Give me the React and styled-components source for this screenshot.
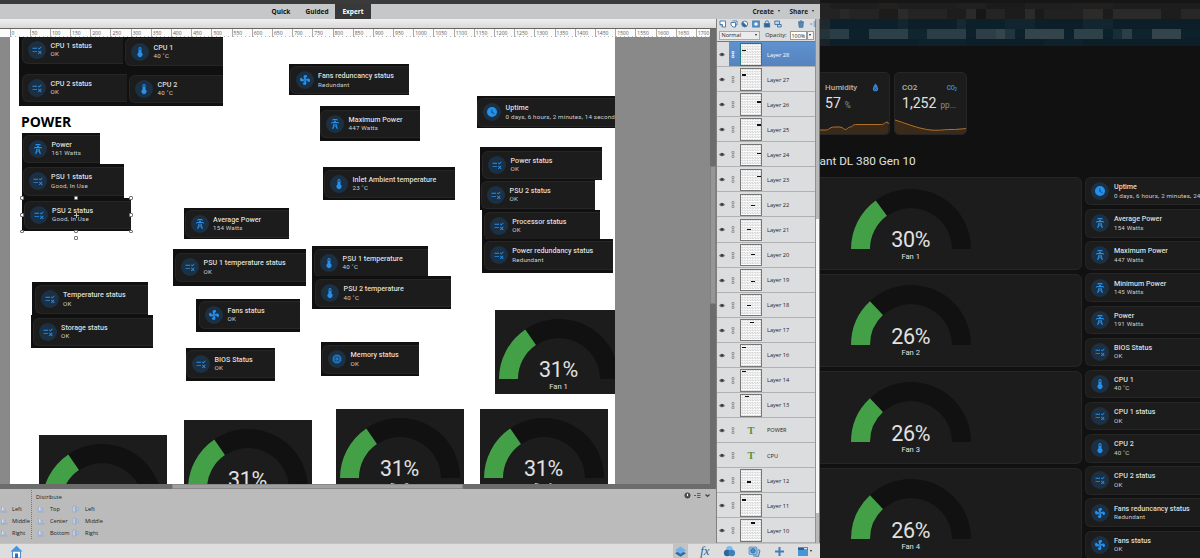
import React from "react";
import styled, { createGlobalStyle, css } from "styled-components";

const GlobalStyle = createGlobalStyle`
  * {
    box-sizing: border-box;
  }
  body {
    margin: 0;
    background: #111111;
    overflow: hidden;
  }
`;

const Screen = styled.div`
  display: flex;
  width: 1200px;
  height: 558px;
  overflow: hidden;
  font-family: Roboto, "Liberation Sans", sans-serif;
`;

/* ---------- icons ---------- */

const PATHS = {
  tower:
    "M8.28,5.45L6.5,4.55L7.76,2H16.23L17.5,4.55L15.72,5.44L15,4H9L8.28,5.45M18.62,8H14.09L13.3,5H10.7L9.91,8H5.38L4.1,10.55L5.89,11.44L6.62,10H17.38L18.1,11.45L19.89,10.56L18.62,8M17.77,22H15.7L15.46,21.1L12,15.9L8.53,21.1L8.3,22H6.23L9.12,11H11.19L10.83,12.35L12,14.1L13.16,12.35L12.81,11H14.88L17.77,22M11.4,15L10.5,13.65L9.32,18.13L11.4,15M14.68,18.12L13.5,13.64L12.6,15L14.68,18.12Z",
  temp: "M15 13V5A3 3 0 0 0 9 5V13A5 5 0 1 0 15 13M12 4A1 1 0 0 1 13 5V8H11V5A1 1 0 0 1 12 4Z",
  fan: "M12,11A1,1 0 0,0 11,12A1,1 0 0,0 12,13A1,1 0 0,0 13,12A1,1 0 0,0 12,11M12.5,2C17,2 17.11,5.57 14.75,6.75C13.76,7.24 13.32,8.29 13.13,9.22C13.61,9.42 14.03,9.73 14.35,10.13C18.05,8.13 22.03,8.92 22.03,12.5C22.03,17 18.46,17.1 17.28,14.73C16.78,13.74 15.72,13.3 14.79,13.11C14.59,13.59 14.28,14 13.88,14.34C15.87,18.03 15.08,22 11.5,22C7,22 6.91,18.42 9.27,17.24C10.25,16.75 10.69,15.71 10.89,14.79C10.4,14.59 9.97,14.27 9.65,13.87C5.96,15.85 2,15.07 2,11.5C2,7 5.56,6.89 6.74,9.26C7.24,10.25 8.29,10.68 9.22,10.87C9.41,10.39 9.73,9.97 10.14,9.65C8.15,5.96 8.94,2 12.5,2Z",
  clock:
    "M12 2A10 10 0 1 0 22 12A10 10 0 0 0 12 2M16.2 16.2L11 13V7H12.5V12.2L17 14.9L16.2 16.2Z",
  chip: "M17,17H7V7H17M21,11V9H19V7C19,5.89 18.1,5 17,5H15V3H13V5H11V3H9V5H7C5.89,5 5,5.89 5,7V9H3V11H5V13H3V15H5V17A2,2 0 0,0 7,19H9V21H11V19H13V21H15V19H17A2,2 0 0,0 19,17V15H21V13H19V11M13,13H11V11H13M15,9H9V15H15V9Z",
  list: "M3 7.7H12V9.4H3ZM3 14.4H12V16.1H3ZM16.6 11L13.6 8L14.8 6.8L16.6 8.6L20.2 5L21.4 6.2ZM15 12.9L17.5 15.4L20 12.900L21.200 14.100L18.700 16.600L21.200 19.100L20 20.300L17.500 17.800L15 20.300L13.800 19.100L16.300 16.600L13.800 14.100Z",
};

const Disc = styled.div`
  display: flex;
  align-items: center;
  justify-content: center;
  flex: none;
  width: 18px;
  height: 18px;
  border-radius: 50%;
  background: #1c3044;

  svg {
    width: 12px;
    height: 12px;
    fill: #2490ec;
  }
`;

const EntityIcon = ({ name }) => (
  <Disc>
    <svg viewBox="0 0 24 24">
      <path d={PATHS[name]} />
    </svg>
  </Disc>
);

/* ---------- dashboard pieces, used in both windows ---------- */

const Tile = styled.div`
  display: flex;
  align-items: center;
  flex: none;
  gap: 4.6px;
  height: 28.4px;
  padding-left: 5px;
  background: #1c1c1c;
  border: 1px solid #262626;
  border-right: 0;
  border-radius: 6px 0 0 6px;
  font-family: Roboto, "Liberation Sans", sans-serif;
  white-space: nowrap;
`;
const TileText = styled.div`
  display: flex;
  flex-direction: column;
`;
const TileName = styled.span`
  color: #dedede;
  font-size: 7.15px;
  font-weight: 500;
  line-height: 9.4px;
`;
const TileState = styled.span`
  color: #cfcfcf;
  font-size: 6.2px;
  letter-spacing: 0.18px;
  line-height: 8.6px;
`;

const EntityTile = ({ icon, name, state }) => (
  <Tile>
    <EntityIcon name={icon} />
    <TileText>
      <TileName>{name}</TileName>
      <TileState>{state}</TileState>
    </TileText>
  </Tile>
);

const GaugeBox = styled.div`
  display: flex;
  flex-direction: column;
  align-items: center;
  width: 120px;
  color: #e1e1e1;
  font-family: Roboto, "Liberation Sans", sans-serif;

  svg {
    display: block;
    width: 120px;
    height: 60px;
  }
`;
const GaugeValue = styled.span`
  margin-top: -19.6px;
  font-size: 21.5px;
  line-height: 22px;
  letter-spacing: -0.3px;
`;
const GaugeName = styled.span`
  margin-top: 0.6px;
  font-size: 7.6px;
  line-height: 10px;
`;

const Gauge = ({ value, name }) => {
  const a = (Math.PI * value) / 100;
  const at = (r) => `${60 - r * Math.cos(a)} ${60 - r * Math.sin(a)}`;
  return (
    <GaugeBox>
      <svg viewBox="0 0 120 60">
        <path d="M0 60A60 60 0 0 1 120 60H101A41 41 0 0 0 19 60Z" fill="#111111" />
        <path d={`M0 60A60 60 0 0 1 ${at(60)}L${at(41)}A41 41 0 0 0 19 60Z`} fill="#43a047" />
      </svg>
      <GaugeValue>{value}%</GaugeValue>
      <GaugeName>{name}</GaugeName>
    </GaugeBox>
  );
};

/* ---------- photo editor ---------- */

const Editor = styled.div`
  display: flex;
  flex-direction: column;
  flex: none;
  width: 820px;
  height: 558px;
  color: #1c1c1c;
  font-family: "Open Sans", "Liberation Sans", sans-serif;
`;
const TitleStrip = styled.div`
  flex: none;
  height: 3.5px;
  background: #3b3b3b;
`;
const MenuBar = styled.div`
  display: flex;
  flex: none;
  height: 15px;
  padding-left: 263px;
  background: #c6c7c8;
  font-size: 6.5px;
  font-weight: 700;
`;
const ModeTab = styled.div`
  display: flex;
  align-items: center;
  justify-content: center;
  width: 36px;
  color: ${({ $active }) => ($active ? "#ffffff" : "#111111")};
  background: ${({ $active }) => ($active ? "#383838" : "transparent")};
`;
const MenuButton = styled.div`
  display: flex;
  align-items: center;
  gap: 4px;
  margin-left: ${({ $first }) => ($first ? "auto" : "9.5px")};
  margin-right: ${({ $first }) => ($first ? "0" : "6px")};
`;
const Caret = styled.i`
  flex: none;
  border: 1.6px solid transparent;
  border-top: 2px solid #222222;
  border-bottom: 0;
`;
const EditorBody = styled.div`
  display: flex;
  flex: 1;
  min-height: 0;
`;
const DocumentColumn = styled.div`
  display: flex;
  flex-direction: column;
  width: 716px;
`;
const OptionsStrip = styled.div`
  flex: none;
  height: 10.5px;
  background: linear-gradient(#efefef, #d9d9d9);
  border-bottom: 1px solid #6b6262;
`;
const DocumentRow = styled.div`
  display: flex;
  flex: none;
  height: 455px;
`;
const DocumentArea = styled.div`
  width: 710px;
  background: #898989;
  overflow: hidden;
`;
const Ruler = styled.div`
  display: flex;
  height: 8px;
  padding-left: 9.5px;
  background: #fbfbfb;
  color: #5c5c5c;
  font-family: "Open Sans", sans-serif;
  font-size: 5px;
  line-height: 9px;
`;
const RulerMark = styled.span`
  flex: none;
  width: 20.2px;
  padding-left: 1px;
  border-left: 0.5px solid #aaaaaa;
  background: repeating-linear-gradient(90deg, #bbbbbb 0 1px, transparent 1px 4px) 0 100% / 100% 1px
    no-repeat;
`;
const VScroll = styled.div`
  display: flex;
  align-items: flex-start;
  width: 6px;
  padding-top: 137px;
  background: #6c6c6c;
`;
const VThumb = styled.div`
  width: 6px;
  height: 138px;
  background: #969696;
  border: 0.5px solid #808080;
`;
const HScroll = styled.div`
  flex: none;
  height: 5px;
  padding-left: 172px;
  background: #6c6c6c;
`;
const HThumb = styled.div`
  width: 291px;
  height: 5px;
  background: #a0a0a0;
  border: 1px solid #888888;
`;

/* the picture being edited: a free canvas, so its layers sit at coordinates */
const Sheet = styled.div`
  position: relative;
  width: 605.5px;
  height: 447px;
  margin-left: 9.5px;
  background: #ffffff;
  overflow: hidden;
`;
const ORIGIN = { x: 9.5, y: 37 };
const Layer = styled.div`
  position: absolute;
  left: ${({ $x }) => $x - ORIGIN.x}px;
  top: ${({ $y }) => $y - ORIGIN.y}px;
  width: ${({ $w }) => $w}px;
  height: ${({ $h }) => $h}px;
  background: ${({ $bg }) => $bg || "#101010"};
  overflow: hidden;
`;
const TileInset = styled.div`
  padding-left: ${({ $left }) => $left}px;
  margin-top: ${({ $top }) => $top}px;
`;
const GaugeInset = styled.div`
  padding: 9px 0 0 3.5px;
`;
const PowerHeading = styled.div`
  position: absolute;
  left: 11.5px;
  top: 75px;
  color: #000000;
  font-family: "Open Sans", sans-serif;
  font-size: 14px;
  font-weight: 700;
  line-height: 20px;
  letter-spacing: -0.1px;
`;
const Handle = styled.i`
  position: absolute;
  left: ${({ $x }) => $x - ORIGIN.x - 1.75}px;
  top: ${({ $y }) => $y - ORIGIN.y - 1.75}px;
  width: 3.5px;
  height: 3.5px;
  background: #ffffff;
  border: 1px solid #777777;
  border-radius: 1px;
`;
const Pivot = styled.svg`
  position: absolute;
  left: 64px;
  top: 175.5px;
  width: 5px;
  height: 5px;
  stroke: #dddddd;
  stroke-width: 0.8;
`;

// x, y, w, h of the cut-out, then the centre of its round icon
const snippets = [
  [19, 37, 106, 32, 37, 50, "list", "CPU 1 status", "OK"],
  [19, 69, 110, 37, 37, 88, "list", "CPU 2 status", "OK"],
  [123, 37, 100, 32, 140, 52, "temp", "CPU 1", "40 ˚C"],
  [127, 69, 96, 37, 144, 89, "temp", "CPU 2", "40 ˚C"],
  [22, 133, 78, 31, 38, 149, "tower", "Power", "161 Watts"],
  [22, 164, 102, 34, 37.5, 181.5, "list", "PSU 1 status", "Good, In Use"],
  [22, 198, 109, 33, 38.5, 215, "list", "PSU 2 status", "Good, In Use"],
  [184, 208, 105, 31, 199.5, 224, "tower", "Average Power", "154 Watts"],
  [289, 64, 120, 31, 304.5, 80.3, "fan", "Fans reduncancy status", "Redundant"],
  [320, 106, 100, 34.5, 334.7, 124, "tower", "Maximum Power", "447 Watts"],
  [323, 167, 132, 32.5, 339, 183.7, "temp", "Inlet Ambient temperature", "23 ˚C"],
  [477, 95.5, 145, 32.5, 492, 112.5, "clock", "Uptime", "0 days, 6 hours, 2 minutes, 14 seconds"],
  [480, 147, 122, 33, 497, 165, "list", "Power status", "OK"],
  [480, 180, 115, 30, 496, 195, "list", "PSU 2 status", "OK"],
  [482, 210, 118, 30, 498.7, 226, "list", "Processor status", "OK"],
  [482, 239, 131, 33.5, 498.7, 255.5, "list", "Power redundancy status", "Redundant"],
  [173, 249, 133, 37, 190, 267.5, "list", "PSU 1 temperature status", "OK"],
  [312, 245.5, 116, 31, 329, 263, "temp", "PSU 1 temperature", "40 ˚C"],
  [312, 276, 138.5, 33, 330, 293.2, "temp", "PSU 2 temperature", "40 ˚C"],
  [32, 282, 116, 33, 49.5, 299.5, "list", "Temperature status", "OK"],
  [31, 315, 121.5, 33, 47.5, 332, "list", "Storage status", "OK"],
  [196, 298.5, 104, 33.5, 214, 315, "fan", "Fans status", "OK"],
  [186, 348, 89, 33, 201, 364, "list", "BIOS Status", "OK"],
  [320.5, 342, 98, 33.5, 337, 359.5, "chip", "Memory status", "OK"],
];
const gaugeLayers = [
  [38.5, 435, 128, 84, "Fan 4"],
  [184, 420, 128, 84, "Fan 3"],
  [336, 409, 128, 84, "Fan 2"],
  [480, 409, 128, 84, "Fan 1"],
  [495, 309.5, 128, 84.5, "Fan 1"],
];
const handles = [
  [22, 198], [76, 198], [131, 198],
  [22, 215], [131, 215],
  [22, 231.5], [76, 231.5], [131, 231.5],
  [76, 238],
];

const Artwork = () => (
  <Sheet>
    {snippets.map(([x, y, w, h, cx, cy, icon, name, state], i) => (
      <Layer key={i} $x={x} $y={y} $w={w} $h={h}>
        <TileInset $left={cx - 15 - x} $top={cy - 14.2 - y}>
          <EntityTile icon={icon} name={name} state={state} />
        </TileInset>
      </Layer>
    ))}
    {gaugeLayers.map(([x, y, w, h, name], i) => (
      <Layer key={i} $x={x} $y={y} $w={w} $h={h} $bg="#1c1c1c">
        <GaugeInset>
          <Gauge value={31} name={name} />
        </GaugeInset>
      </Layer>
    ))}
    <PowerHeading>POWER</PowerHeading>
    {handles.map(([x, y]) => (
      <Handle key={`${x}-${y}`} $x={x} $y={y} />
    ))}
    <Pivot viewBox="0 0 5 5">
      <path d="M2.5 0V5M0 2.5H5" />
    </Pivot>
  </Sheet>
);

/* align / distribute options under the document */
const OptionsPanel = styled.div`
  display: flex;
  flex: 1;
  background: #bbbbbb;
  border-bottom: 1px solid #999999;
  font-size: 5.6px;
  line-height: 12.2px;
`;
const AlignGroup = styled.div`
  width: 32px;
  padding-top: 12.5px;
  border-right: 1px dotted #777777;
  margin: 1px 0 4px;
  overflow: hidden;
`;
const DistributeGroup = styled.div`
  padding: 1.5px 0 0 4px;
`;
const GroupTitle = styled.div`
  height: 12px;
`;
const OptionColumns = styled.div`
  display: flex;
  padding-left: 1px;
`;
const OptionColumn = styled.div`
  width: 35px;
`;
const Option = styled.div`
  display: flex;
  align-items: center;
  gap: ${({ $tight }) => ($tight ? 4 : 5)}px;
  height: 12.2px;

  svg {
    flex: none;
    width: 8px;
    height: 8px;
    fill: #d3dff0;
    stroke: #8fa8cb;
    stroke-width: 0.7;
  }
`;
const PanelTools = styled.div`
  display: flex;
  gap: 3px;
  margin: 2.5px 5px 0 auto;

  svg {
    width: 7px;
    height: 7px;
    fill: none;
    stroke: #444444;
  }
`;

const AlignIcon = ({ vertical }) => (
  <svg viewBox="0 0 8 8">
    {vertical ? (
      <path d="M1 1H3V7H1ZM5 3H6.5V5.5H5ZM4 0.5V7.5" />
    ) : (
      <path d="M1.5 1V6H4V3.5H5.5V6M0.5 7H7.5" />
    )}
  </svg>
);
const OptionList = ({ items, vertical, tight }) => (
  <OptionColumn>
    {items.map((item) => (
      <Option key={item} $tight={tight}>
        <AlignIcon vertical={vertical} />
        {item}
      </Option>
    ))}
  </OptionColumn>
);

/* layers panel */
const LayersPanel = styled.div`
  display: flex;
  width: 104px;
  border-left: 1px solid #808080;
  background: #dcdddf;
`;
const LayersMain = styled.div`
  display: flex;
  flex-direction: column;
  width: 99px;
  border-right: 1px solid #909090;
`;
const LayerTools = styled.div`
  display: flex;
  align-items: center;
  flex: none;
  gap: 3px;
  height: 11px;
  padding: 0 0 0 1.5px;

  svg {
    flex: none;
    width: 8px;
    height: 8px;
    fill: none;
    stroke: #3d74a6;
    stroke-width: 0.9;
  }
  svg:nth-child(7) {
    margin-left: 12px;
  }
  svg:nth-child(8) {
    margin-left: 2px;
  }
`;
const BlendRow = styled.div`
  display: flex;
  align-items: center;
  flex: none;
  height: 12.5px;
  padding: 0 1.5px;
  border-bottom: 1px solid #777777;
  font-size: 5.6px;
`;
const BlendSelect = styled.div`
  display: flex;
  align-items: center;
  justify-content: space-between;
  width: 46px;
  height: 9px;
  padding: 0 2px;
  background: #ececec;
  border: 0.5px solid #aaaaaa;
`;
const OpacityLabel = styled.span`
  margin-left: 5px;
`;
const OpacityValue = styled.span`
  flex: none;
  width: 17px;
  height: 9px;
  margin-left: 3px;
  padding-left: 1px;
  background: #ffffff;
  border: 0.5px solid #999999;
  font-size: 5.4px;
  line-height: 8px;
`;
const OpacityDrop = styled.span`
  display: flex;
  align-items: center;
  justify-content: center;
  flex: none;
  width: 7px;
  height: 9px;
  background: #f4f4f4;
  border: 0.5px solid #999999;
`;
const LayerRow = styled.div`
  display: flex;
  align-items: center;
  flex: none;
  height: 25.07px;
  padding-top: 1px;
  border-bottom: 1px solid #b0b1b3;
  font-size: 5.6px;

  ${({ $selected }) =>
    $selected &&
    css`
      background: linear-gradient(90deg, #dcdddf 12px, transparent 12px),
        linear-gradient(#5f92cf, #5583bf);
      color: #ffffff;
    `}
`;
const EyeCell = styled.div`
  width: 11px;
  line-height: 0;

  svg {
    width: 6px;
    height: 5px;
    margin-left: 1.7px;
  }
`;
const LinkCell = styled.div`
  width: 12px;
  line-height: 0;

  svg {
    width: 4px;
    height: 7px;
    margin-left: 2.5px;
    fill: none;
    stroke: ${({ $selected }) => ($selected ? "#ffffff" : "#858585")};
    stroke-width: 0.7;
  }
`;
const Thumb = styled.div`
  width: 22px;
  height: 22.5px;
  margin-right: 5px;
  border: 0.8px solid ${({ $selected }) => ($selected ? "#1f7b86" : "#777777")};
  background: conic-gradient(#d2d2d2 25%, #ffffff 0 50%, #d2d2d2 0 75%, #ffffff 0) 0 0 / 2.6px 2.6px;
`;
const ThumbMark = styled.div`
  width: 4.2px;
  height: 1.2px;
  margin: ${({ $y }) => $y}px 0 0 ${({ $x }) => $x}px;
  background: #111111;
`;
const TypeThumb = styled.div`
  width: 22px;
  margin-right: 5px;
  color: #58923a;
  font-family: "Liberation Serif", serif;
  font-size: 10.5px;
  font-weight: 700;
  text-align: center;
`;
const PanelScroll = styled.div`
  flex: 1;
  padding-top: 200px;
  background: #b9b9b9;
  border-right: 0.5px solid #777777;
`;
const PanelThumb = styled.div`
  height: 294px;
  background: #f7f7f7;
`;

// name, then where the painted spot sits inside the thumbnail
const layers = [
  ["Layer 28", 1, 6],
  ["Layer 27", 1, 5],
  ["Layer 26", 16, 7],
  ["Layer 25", 16, 5],
  ["Layer 24", 16, 8],
  ["Layer 23", 16, 6],
  ["Layer 22", 10, 10],
  ["Layer 21", 6, 9],
  ["Layer 20", 10, 9],
  ["Layer 19", 10, 11],
  ["Layer 18", 6, 10],
  ["Layer 17", 9, 2],
  ["Layer 16", 0.5, 2],
  ["Layer 14", 1, 0.5],
  ["Layer 13", 4, 1],
  ["POWER"],
  ["CPU"],
  ["Layer 12", 6, 11],
  ["Layer 11", 1, 4],
  ["Layer 10", 10, 2],
];

const Eye = () => (
  <svg viewBox="0 0 6 5">
    <path d="M0 2.5Q3 -1.2 6 2.5Q3 6.2 0 2.5Z" fill="#6a6a6a" />
    <circle cx="3" cy="2.3" r="1.1" fill="#303030" />
  </svg>
);

const LayerTool = ({ children }) => <svg viewBox="0 0 8 8">{children}</svg>;

const Layers = () => (
  <LayersPanel>
    <LayersMain>
      <LayerTools>
        <LayerTool><path d="M1 1H6.5V7H3.5L1 4.5ZM1 4.5H3.5V7" fill="#ffffff" /></LayerTool>
        <LayerTool><path d="M2.5 1H7V5H5.5V7H3L1 5V2.5H5.5V5" fill="#ffffff" /></LayerTool>
        <LayerTool>
          <circle cx="3.7" cy="4" r="2.9" fill="#ffffff" />
          <path d="M1.6 2A2.9 2.9 0 0 0 5.7 6Z" fill="#2f6595" />
        </LayerTool>
        <LayerTool>
          <rect x="0.7" y="1" width="6.6" height="6" fill="#5d9bd6" />
          <circle cx="4" cy="4" r="1.6" fill="#ffffff" stroke="none" />
        </LayerTool>
        <LayerTool>
          <path d="M2.3 3.5V2.5A1.7 1.7 0 0 1 5.7 2.5V3.5" />
          <rect x="1.3" y="3.6" width="5.4" height="3.4" fill="#2f6595" />
        </LayerTool>
        <LayerTool><path d="M0.8 1H5.5V4.5H0.8ZM3.5 4.5H7.2V7H3.5Z" fill="#b9d4ec" /></LayerTool>
        <LayerTool><path d="M1 1.8H7M3 0.9H5M1.7 2.5L2.2 7.3H5.8L6.3 2.5Z" fill="#5b8ab8" /></LayerTool>
        <LayerTool><path d="M0.3 4H2.3M3.5 2H7M3.5 4H7M3.5 6H7" strokeWidth="0.8" /></LayerTool>
      </LayerTools>
      <BlendRow>
        <BlendSelect>
          Normal <Caret />
        </BlendSelect>
        <OpacityLabel>Opacity:</OpacityLabel>
        <OpacityValue>100%</OpacityValue>
        <OpacityDrop>
          <Caret />
        </OpacityDrop>
      </BlendRow>
      {layers.map(([name, x, y], i) => (
        <LayerRow key={name} $selected={i === 0}>
          <EyeCell>
            <Eye />
          </EyeCell>
          <LinkCell $selected={i === 0}>
            <svg viewBox="0 0 4 7">
              <path d="M1 0.5H3V2.5H1ZM1 4.5H3V6.5H1ZM2 2.5V4.5" />
            </svg>
          </LinkCell>
          {x === undefined ? (
            <TypeThumb>T</TypeThumb>
          ) : (
            <Thumb $selected={i === 0}>
              <ThumbMark $x={x} $y={y} />
            </Thumb>
          )}
          {name}
        </LayerRow>
      ))}
    </LayersMain>
    <PanelScroll>
      <PanelThumb />
    </PanelScroll>
  </LayersPanel>
);

const BottomBar = styled.div`
  display: flex;
  align-items: center;
  justify-content: space-between;
  flex: none;
  height: 15px;
  padding: 0 3.5px 0 10px;
  background: #dedede;
  border-top: 1px solid #c2c2c2;

  svg {
    display: block;
    flex: none;
    width: 13px;
    height: 13px;
  }
`;
const PanelSwitch = styled.div`
  display: flex;
  align-items: center;
  height: 14px;
`;
const SwitchButton = styled.div`
  display: flex;
  align-items: center;
  justify-content: center;
  width: 24.8px;
  height: 14px;
  color: #35628c;
  font-family: "Liberation Serif", serif;
  font-size: 13px;
  font-style: italic;
  ${({ $active }) =>
    $active &&
    css`
      width: 15px;
      margin-right: 5px;
      background: #c3c3c3;
    `}
`;

const PhotoEditor = () => (
  <Editor>
    <TitleStrip />
    <MenuBar>
      <ModeTab>Quick</ModeTab>
      <ModeTab>Guided</ModeTab>
      <ModeTab $active>Expert</ModeTab>
      <MenuButton $first>
        Create <Caret />
      </MenuButton>
      <MenuButton>
        Share <Caret />
      </MenuButton>
    </MenuBar>
    <EditorBody>
      <DocumentColumn>
        <OptionsStrip />
        <DocumentRow>
          <DocumentArea>
            <Ruler>
              {Array.from({ length: 35 }, (_, i) => (
                <RulerMark key={i}>{i * 50}</RulerMark>
              ))}
            </Ruler>
            <Artwork />
          </DocumentArea>
          <VScroll>
            <VThumb />
          </VScroll>
        </DocumentRow>
        <HScroll>
          <HThumb />
        </HScroll>
        <OptionsPanel>
          <AlignGroup>
            <OptionList items={["Left", "Middle", "Right"]} tight />
          </AlignGroup>
          <DistributeGroup>
            <GroupTitle>Distribute</GroupTitle>
            <OptionColumns>
              <OptionList items={["Top", "Center", "Bottom"]} />
              <OptionList items={["Left", "Middle", "Right"]} vertical />
            </OptionColumns>
          </DistributeGroup>
          <PanelTools>
            <svg viewBox="0 0 7 7">
              <circle cx="3.5" cy="3.5" r="2.6" fill="#555555" />
              <path d="M3.5 1.8V4" stroke="#ffffff" />
            </svg>
            <svg viewBox="0 0 7 7">
              <path d="M0 3.5H2M3 1.5H6.5M3 3.5H6.5M3 5.5H6.5" strokeWidth="0.8" />
            </svg>
            <svg viewBox="0 0 7 7">
              <path d="M1.5 2.5L3.5 4.5L5.5 2.5" strokeWidth="1.2" />
            </svg>
          </PanelTools>
        </OptionsPanel>
      </DocumentColumn>
      <Layers />
    </EditorBody>
    <BottomBar>
      <svg viewBox="0 0 13 13">
        <path d="M2.5 6H10.5V13H2.5Z" fill="#ffffff" stroke="#4a8dca" />
        <path d="M6.5 0.8L12.5 6.6H0.5Z" fill="#4a94d8" />
        <path d="M5 8.5H8V13H5Z" fill="#2f6fae" />
      </svg>
      <PanelSwitch>
        <SwitchButton $active>
          <svg viewBox="0 0 13 13">
            <path d="M6.5 5L12 8.2L6.5 11.8L1 8.2Z" fill="#33699d" />
            <path d="M6.5 1.5L12 5.2L6.5 9L1 5.2Z" fill="#6fb1ea" />
          </svg>
        </SwitchButton>
        <SwitchButton>fx</SwitchButton>
        <SwitchButton>
          <svg viewBox="0 0 13 13">
            <circle cx="6.5" cy="4.3" r="3.3" fill="#7dbcf0" />
            <circle cx="4.2" cy="8" r="3.3" fill="#2f6599" />
            <circle cx="8.8" cy="8" r="3.3" fill="#3f7fbb" />
          </svg>
        </SwitchButton>
        <SwitchButton>
          <svg viewBox="0 0 13 13" fill="none" stroke="#33699d" strokeWidth="0.8">
            <path d="M10 4.500L12 5.500L10.500 11.500L5 10.800" fill="#a8c7e4" />
            <rect x="1" y="2" width="8" height="7.5" rx="1" fill="#8fc0ea" strokeWidth="0.5" />
            <circle cx="5" cy="5.800" r="2.2" fill="#4a8dca" />
          </svg>
        </SwitchButton>
        <SwitchButton>
          <svg viewBox="0 0 13 13">
            <path d="M5.5 2H7.5V5.5H11V7.5H7.5V11H5.5V7.5H2V5.5H5.5Z" fill="#3f7fbb" />
          </svg>
        </SwitchButton>
        <SwitchButton>
          <svg viewBox="0 0 13 13">
            <path d="M1 2.5H11V11H1Z" fill="#4a94d8" />
            <path d="M1 2.5H11V5H1Z" fill="#2b5f92" />
            <path d="M7 3.2H10.3V4.4H7Z" fill="#ffffff" />
          </svg>
          <Caret />
        </SwitchButton>
      </PanelSwitch>
    </BottomBar>
  </Editor>
);

/* ---------- dashboard window ---------- */

const Dashboard = styled.div`
  display: flex;
  flex-direction: column;
  flex: none;
  width: 380px;
  height: 558px;
  background: #111111;
  color: #e1e1e1;
`;
const TopLine = styled.div`
  flex: none;
  height: 3px;
  background: #161616;
`;
const MosaicRow = styled.div`
  display: flex;
  flex: none;
  height: ${({ $h }) => $h}px;
`;
const MosaicCell = styled.div`
  flex: none;
  width: ${({ $n }) => $n * 9.75}px;
  background: ${({ $c }) => $c};
`;

// runs of [cells, colour] of the censored browser tabs and toolbar
const mosaic = [
  { h: 6, runs: [[1, "#232323"], [5, "#1e1e1e"], [2, "#232020"], [6, "#1e1e1e"], [3, "#202020"], [4, "#1b1b1b"], [5, "#1f1f1f"], [4, "#221f1f"], [9, "#1d1d1d"]] },
  { h: 10, runs: [[2, "#232323"], [1, "#292929"], [3, "#242424"], [2, "#1c1c1c"], [1, "#2b2b2b"], [4, "#242424"], [2, "#1d1d1d"], [1, "#2a2a2a"], [1, "#171717"], [2, "#242424"], [2, "#1c1c1c"], [1, "#2b2b2b"], [1, "#1a1a1a"], [4, "#212121"], [2, "#2b2b2b"], [1, "#1c1c1c"], [5, "#2a2a2a"], [2, "#1d1d1d"], [2, "#272727"]] },
  { h: 10, runs: [[1, "#1e282d"], [7, "#0c202b"], [1, "#12262f"], [5, "#0c1f29"], [1, "#142933"], [4, "#0c202a"], [3, "#102530"], [5, "#0c1f29"], [3, "#11262f"], [9, "#0c1f29"]] },
  { h: 10, runs: [[1, "#24343b"], [2, "#2b3d45"], [2, "#0d212c"], [4, "#2d3f47"], [2, "#0f2530"], [4, "#2b3e46"], [1, "#0d212c"], [2, "#2d3e46"], [1, "#34454c"], [1, "#22343d"], [1, "#0d212c"], [4, "#33444b"], [1, "#0d212c"], [3, "#2f4148"], [1, "#0d212c"], [1, "#172d37"], [1, "#2c3f47"], [2, "#0e232d"], [3, "#33444b"], [3, "#0d212c"]] },
  { h: 7, runs: [[1, "#1c2327"], [9, "#0d1f28"], [5, "#0e222b"], [8, "#0c1e27"], [4, "#0f222b"], [13, "#0c1e26"]] },
];

const SensorRow = styled.div`
  display: flex;
  flex: none;
  gap: 4px;
  margin-top: 26px;
`;
const SensorCard = styled.div`
  display: flex;
  flex-direction: column;
  width: ${({ $w }) => $w}px;
  height: 63px;
  padding-top: 10px;
  background: #1c1c1c;
  border: 1px solid #262626;
  border-left-width: ${({ $cut }) => ($cut ? 0 : 1)}px;
  border-radius: ${({ $cut }) => ($cut ? "0 5px 5px 0" : "5px")};
  overflow: hidden;

  > svg {
    display: block;
    width: 100%;
    height: 16px;
    margin-top: auto;
  }
`;
const SensorHead = styled.div`
  display: flex;
  align-items: center;
  justify-content: space-between;
  height: 9px;
  padding: 0 ${({ $right }) => $right}px 0 ${({ $left }) => $left}px;
  color: #b4b4b4;
  font-size: 8px;
  font-weight: 500;

  svg {
    width: 9px;
    height: 9px;
  }
`;
const SensorValue = styled.div`
  margin-top: 2.5px;
  padding-left: ${({ $left }) => $left}px;
  font-size: 14.1px;
  line-height: 17px;
  white-space: nowrap;
`;
const Unit = styled.span`
  margin-left: 4px;
  color: #8f8f8f;
  font-size: 8.2px;
`;
const CO2 = styled.span`
  color: #3a82cc;
  font-size: 6.5px;
  font-weight: 700;
  letter-spacing: -0.5px;

  sub {
    font-size: 4.5px;
    vertical-align: -1px;
  }
`;
const ServerTitle = styled.div`
  flex: none;
  height: 26px;
  margin: 16px 0 0 -0.5px;
  font-size: 11.75px;
  line-height: 20px;
`;
const Columns = styled.div`
  display: flex;
  gap: 3.7px;
  flex: 1;
  min-height: 0;
`;
const FanColumn = styled.div`
  display: flex;
  flex-direction: column;
  gap: 4.4px;
  width: 261.7px;
`;
const FanCard = styled.div`
  flex: none;
  height: 92.6px;
  padding: 10.5px 0 0 30.7px;
  background: #1c1c1c;
  border: 1px solid #262626;
  border-left: 0;
  border-radius: 0 6px 6px 0;
`;
const TileColumn = styled.div`
  display: flex;
  flex-direction: column;
  gap: 3.75px;
  flex: 1;
  overflow: hidden;
`;

const fans = [30, 26, 26, 26];
const entities = [
  ["clock", "Uptime", "0 days, 6 hours, 2 minutes, 24 seconds"],
  ["tower", "Average Power", "154 Watts"],
  ["tower", "Maximum Power", "447 Watts"],
  ["tower", "Minimum Power", "145 Watts"],
  ["tower", "Power", "191 Watts"],
  ["list", "BIOS Status", "OK"],
  ["temp", "CPU 1", "40 ˚C"],
  ["list", "CPU 1 status", "OK"],
  ["temp", "CPU 2", "40 ˚C"],
  ["list", "CPU 2 status", "OK"],
  ["fan", "Fans reduncancy status", "Redundant"],
  ["fan", "Fans status", "OK"],
];

const Chart = ({ width, line }) => (
  <svg viewBox={`0 0 ${width} 16`} preserveAspectRatio="none">
    <path d={`${line}V16H0Z`} fill="#3a2a19" />
    <path d={line} fill="none" stroke="#b0702a" strokeWidth="1" />
  </svg>
);

const DashboardWindow = () => (
  <Dashboard>
    <TopLine />
    {mosaic.map(({ h, runs }, i) => (
      <MosaicRow key={i} $h={h}>
        {runs.map(([n, c], j) => (
          <MosaicCell key={j} $n={n} $c={c} />
        ))}
      </MosaicRow>
    ))}
    <SensorRow>
      <SensorCard $w={69.5} $cut>
        <SensorHead $left={5} $right={9}>
          Humidity
          <svg viewBox="0 0 24 24">
            <path d="M12 1S5 9 5 15A7 7 0 0 0 19 15C19 9 12 1 12 1Z" fill="#3a82cc" />
            <path d="M9 18L15 12M9 12.5H10.5M13.5 17.5H15" stroke="#1c1c1c" strokeWidth="1.5" />
          </svg>
        </SensorHead>
        <SensorValue $left={5}>
          57<Unit>%</Unit>
        </SensorValue>
        <Chart
          width={69}
          line="M0 12H6C9 12 9 9.5 14 9H20C24 9.5 23 11.5 26 11.5C29 10 28 9 31 9C33 8.500 33 6.500 36 6.500H62C65 6.500 65 4 68 4L69 6"
        />
      </SensorCard>
      <SensorCard $w={73.5}>
        <SensorHead $left={7.5} $right={9.5}>
          CO2
          <CO2>
            CO<sub>2</sub>
          </CO2>
        </SensorHead>
        <SensorValue $left={7.5}>
          1,252<Unit>pp...</Unit>
        </SensorValue>
        <Chart width={72} line="M0 2C10 5 22 10 32 11.500C44 13.500 50 11 60 11.500L72 10.500" />
      </SensorCard>
    </SensorRow>
    <ServerTitle>ant DL 380 Gen 10</ServerTitle>
    <Columns>
      <FanColumn>
        {fans.map((value, i) => (
          <FanCard key={i}>
            <Gauge value={value} name={`Fan ${i + 1}`} />
          </FanCard>
        ))}
      </FanColumn>
      <TileColumn>
        {entities.map(([icon, name, state]) => (
          <EntityTile key={name} icon={icon} name={name} state={state} />
        ))}
      </TileColumn>
    </Columns>
  </Dashboard>
);

const App = () => {
  return (
    <Screen>
      <GlobalStyle />
      <PhotoEditor />
      <DashboardWindow />
    </Screen>
  );
};

export default App;
